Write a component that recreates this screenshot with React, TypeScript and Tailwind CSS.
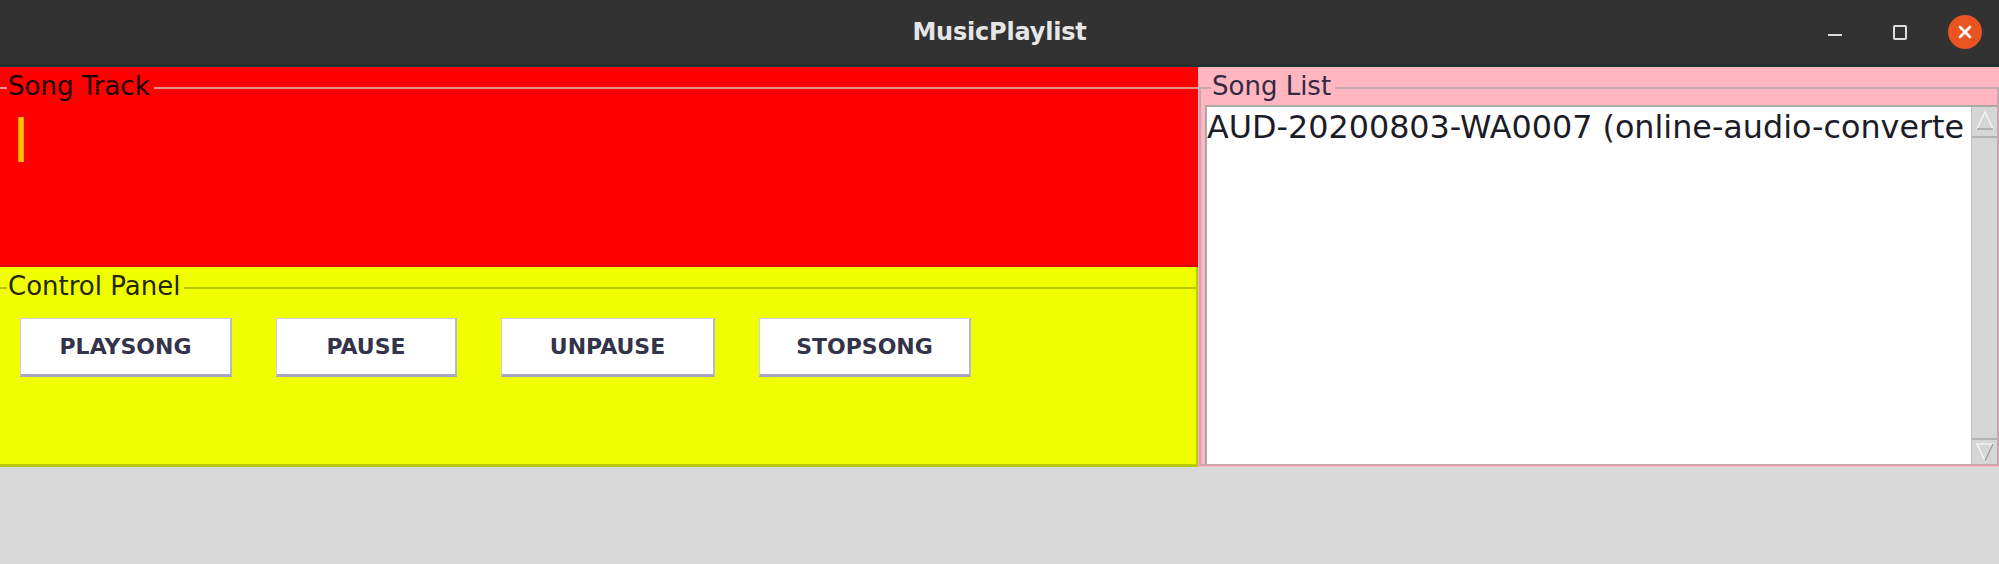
import React from 'react'

const buttons = [
  { label: 'PLAYSONG', w: 'w-[212px]' },
  { label: 'PAUSE', w: 'w-[181px]' },
  { label: 'UNPAUSE', w: 'w-[214px]' },
  { label: 'STOPSONG', w: 'w-[212px]' },
]

function TitleBar() {
  return (
    <div className="h-[67px] shrink-0 bg-[#323232] border-b-[3px] border-[#243030] grid grid-cols-[1fr_auto_1fr] items-center">
      <div />
      <span className="text-[24px] font-bold text-[#e6e6e6] tracking-[-0.2px]">MusicPlaylist</span>
      <div className="flex justify-end items-center gap-[31px] pr-[17px]">
        <div className="w-[34px] h-[34px] flex items-center justify-center">
          <div className="w-[14px] h-[2px] bg-[#dddddd] mt-[6px]" />
        </div>
        <div className="w-[34px] h-[34px] flex items-center justify-center">
          <div className="w-[14px] h-[15px] border-2 border-[#dddddd] rounded-[2px]" />
        </div>
        <div className="w-[34px] h-[34px] rounded-full bg-[#e95420] flex items-center justify-center">
          <svg width="14" height="14" viewBox="0 0 14 14">
            <path d="M2 2 L12 12 M12 2 L2 12" stroke="#ffffff" strokeWidth="2.6" strokeLinecap="round" />
          </svg>
        </div>
      </div>
    </div>
  )
}

function SongTrack() {
  return (
    <div className="h-[200px] bg-[#ff0000] border-b-2 border-[#d40000] flex flex-col pt-[4px]">
      <div className="flex items-center h-[34px]">
        <div className="w-[7px] h-[2px] bg-[#e89090]" />
        <span className="self-start leading-[30px] text-[26px] text-[#1a0000] px-[1px]">Song Track</span>
        <div className="flex-1 h-[2px] bg-[#e89090] ml-[3px]" />
      </div>
      <div className="ml-[18px] mt-[12px] w-[6px] h-[45px] bg-[#ffc400] border-x border-[#ff9d00]" />
    </div>
  )
}

function ControlPanel() {
  return (
    <div className="flex-1 bg-[#f0ff00] border-b-[3px] border-r-[2px] border-[#b9c800] flex flex-col pt-[4px]">
      <div className="flex items-center h-[34px]">
        <div className="w-[7px] h-[2px] bg-[#b4c300]" />
        <span className="self-start leading-[30px] text-[26px] text-[#262600] px-[1px]">Control Panel</span>
        <div className="flex-1 h-[2px] bg-[#b4c300] ml-[3px]" />
      </div>
      <div className="flex gap-[44px] pl-[20px] mt-[13px]">
        {buttons.map((b) => (
          <button
            key={b.label}
            className={`${b.w} h-[59px] bg-white border border-[#cfcfe2] border-b-[3px] border-b-[#a8a8c0] border-r-[2px] border-r-[#b8b8cc] flex items-center justify-center text-[22px] font-bold text-[#33334a]`}
          >
            {b.label}
          </button>
        ))}
      </div>
    </div>
  )
}

function SongList() {
  return (
    <div className="flex-1 min-w-0 bg-[#ffb6c1] flex flex-col pt-[4px] pl-[1px] pb-[1px]">
      <div className="flex h-[34px]">
        <div className="w-[12px] mt-[16px] border-t-2 border-l-2 border-[#c9a6ae]" />
        <span className="leading-[30px] text-[26px] text-[#332a40] px-[1px]">Song List</span>
        <div className="flex-1 mt-[16px] ml-[3px] border-t-2 border-r-2 border-[#c9a6ae]" />
      </div>
      <div className="flex-1 flex border-x-2 border-b-2 border-[#c9a6ae] pl-[4px] min-h-0 min-w-0">
        <div className="flex-1 flex border-t-2 border-l-2 border-[#a9a9a9] bg-white min-w-0">
          <div className="flex-1 overflow-hidden pt-[2px] min-w-0">
            <div className="whitespace-nowrap text-[31.8px] leading-[36px] text-[#1c1c28]">
              AUD-20200803-WA0007 (online-audio-converte
            </div>
          </div>
          <div className="w-[26px] shrink-0 bg-[#d6d6d6] border-l border-[#bdbdbd] flex flex-col">
            <div className="h-[31px] border-b-2 border-[#b3b3b3] flex items-start justify-center pt-[3px]">
              <svg width="20" height="22" viewBox="0 0 20 22">
                <polygon points="10,2 18,19 2,19" fill="none" stroke="#f5f5f5" strokeWidth="1.5" />
                <polyline points="18,19 2,19" fill="none" stroke="#9d9d9d" strokeWidth="1.5" />
              </svg>
            </div>
            <div className="flex-1" />
            <div className="h-[26px] border-t-2 border-[#b3b3b3] flex items-end justify-center pb-[1px]">
              <svg width="20" height="22" viewBox="0 0 20 22">
                <polygon points="2,3 18,3 10,20" fill="none" stroke="#f5f5f5" strokeWidth="1.5" />
                <polyline points="18,3 10,20" fill="none" stroke="#9d9d9d" strokeWidth="1.5" />
              </svg>
            </div>
          </div>
        </div>
      </div>
    </div>
  )
}

export default function App() {
  return (
    <div className="w-[1999px] h-[564px] bg-[#d9d9d9] flex flex-col font-['DejaVu_Sans',sans-serif] overflow-hidden">
      <TitleBar />
      <div className="h-[400px] flex shrink-0">
        <div className="w-[1198px] shrink-0 flex flex-col">
          <SongTrack />
          <ControlPanel />
        </div>
        <SongList />
      </div>
    </div>
  )
}
